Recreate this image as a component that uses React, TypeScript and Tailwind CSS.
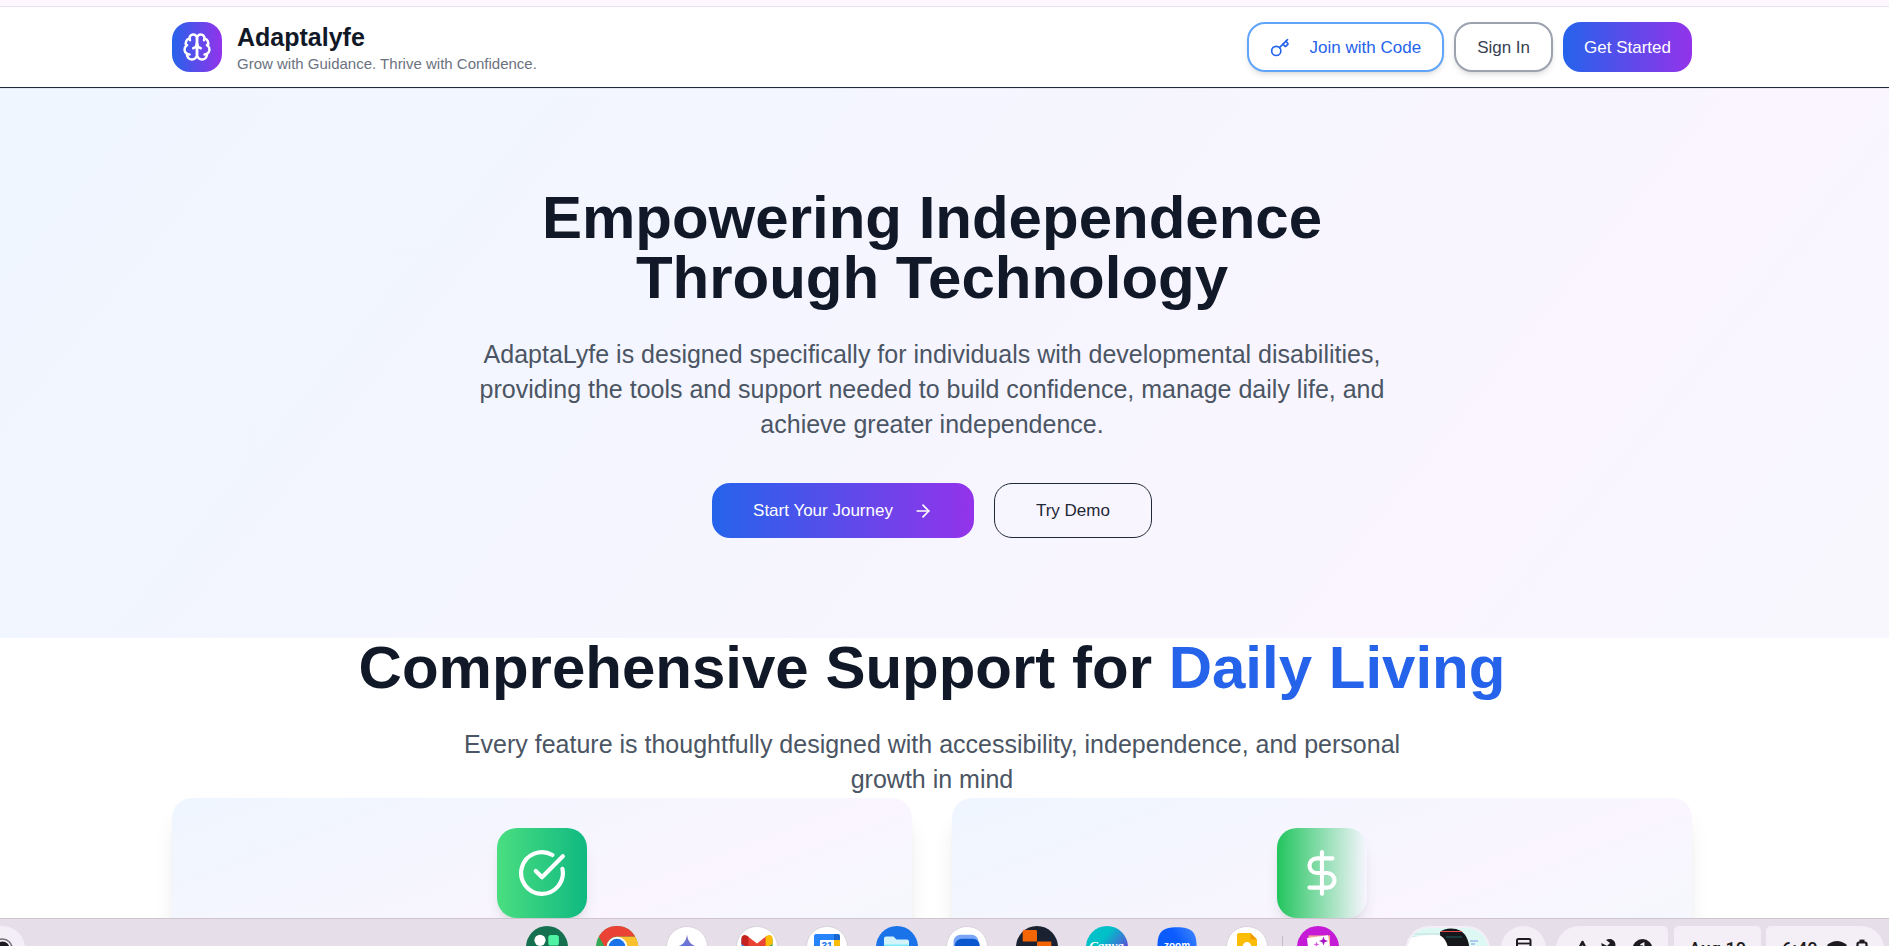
import type { ReactNode } from "react";
import { ArrowRight, CircleCheckBig, DollarSign, Key } from "lucide-react";

function BrainMark() {
  return (
    <svg
      viewBox="0 0 24 24"
      className="size-[30px]"
      fill="none"
      stroke="currentColor"
      strokeWidth="2"
      strokeLinecap="round"
      strokeLinejoin="round"
      aria-hidden="true"
    >
      <path d="M12 5a3 3 0 1 0-5.997.125 4 4 0 0 0-2.526 5.77 4 4 0 0 0 .556 6.588A4 4 0 1 0 12 18Z" />
      <path d="M12 5a3 3 0 1 1 5.997.125 4 4 0 0 1 2.526 5.77 4 4 0 0 1-.556 6.588A4 4 0 1 1 12 18Z" />
      <path d="M15 13a4.5 4.5 0 0 1-3-4 4.5 4.5 0 0 1-3 4" />
      <path d="M17.599 6.5a3 3 0 0 0 .399-1.375" />
      <path d="M6.003 5.125A3 3 0 0 0 6.401 6.5" />
      <path d="M3.477 10.896a4 4 0 0 1 .585-.396" />
      <path d="M19.938 10.5a4 4 0 0 1 .585.396" />
      <path d="M6 18a4 4 0 0 1-1.967-.516" />
      <path d="M19.967 17.484A4 4 0 0 1 18 18" />
    </svg>
  );
}

function Header() {
  return (
    <header className="relative z-10 shrink-0 border-b border-[#1f2937] bg-white pr-[25px] shadow-2xs">
      <div className="mx-auto flex h-20 max-w-[1600px] items-center justify-between px-10">
        <div className="flex items-center gap-[15px]">
          <div className="flex size-[50px] items-center justify-center rounded-[18px] bg-linear-to-r/srgb from-[#2563eb] to-[#9333ea] text-white">
            <BrainMark />
          </div>
          <div>
            <div className="text-[25px] leading-[34px] font-bold text-[#111827]">Adaptalyfe</div>
            <p className="text-[15px] leading-5 text-[#6b7280]">Grow with Guidance. Thrive with Confidence.</p>
          </div>
        </div>
        <div className="flex items-center gap-2.5">
          <button
            type="button"
            className="flex h-[50px] items-center gap-5 rounded-[18px] border-2 border-[#60a5fa] bg-white px-[21px] pt-px text-[17px] text-[#2563eb] shadow-md"
          >
            <Key size={20} />
            Join with Code
          </button>
          <button
            type="button"
            className="h-[50px] rounded-[18px] border-2 border-[#9ca3af] bg-white px-[21px] pt-px text-[17px] text-[#374151] shadow-md"
          >
            Sign In
          </button>
          <button
            type="button"
            className="h-[50px] rounded-[18px] bg-linear-to-r/srgb from-[#2563eb] to-[#9333ea] px-[21px] pt-px text-[17px] text-white"
          >
            Get Started
          </button>
        </div>
      </div>
    </header>
  );
}

function Hero() {
  return (
    <section className="bg-[linear-gradient(129deg,#eff6ff_0%,#faf5ff_78%,#f7f7fd_100%)] py-[100px] pr-[25px] text-center">
      <h1 className="text-[60px] leading-[60px] font-bold text-[#111827]">
        Empowering Independence
        <br />
        Through Technology
      </h1>
      <p className="mx-auto mt-[29px] max-w-[960px] pb-px text-[25px] leading-[35px] text-[#4b5563]">
        AdaptaLyfe is designed specifically for individuals with developmental disabilities, providing the tools and
        support needed to build confidence, manage daily life, and achieve greater independence.
      </p>
      <div className="mt-10 flex justify-center gap-5">
        <button
          type="button"
          className="flex h-[55px] items-center gap-5 rounded-[18px] bg-linear-to-r/srgb from-[#2563eb] to-[#9333ea] px-[41px] text-[17px] text-white"
        >
          Start Your Journey
          <ArrowRight size={20} />
        </button>
        <button
          type="button"
          className="h-[55px] rounded-[18px] border border-[#1f2937] px-[41px] text-[17px] text-[#1f2937]"
        >
          Try Demo
        </button>
      </div>
    </section>
  );
}

function FeatureCard({ tile, children }: { tile: string; children: ReactNode }) {
  return (
    <article className="min-h-[280px] rounded-[20px] bg-[linear-gradient(to_bottom_right,#eff6ff,#faf5ff,#effbf9)] p-[30px] shadow-xl">
      <div className={`mx-auto flex size-[90px] items-center justify-center rounded-[20px] text-white shadow-lg ${tile}`}>
        {children}
      </div>
    </article>
  );
}

function Features() {
  return (
    <section className="bg-white pr-[25px]">
      <div className="text-center">
        <h2 className="text-[60px] leading-[60px] font-bold text-[#111827]">
          Comprehensive Support for <span className="text-[#2563eb]">Daily Living</span>
        </h2>
        <p className="mx-auto mt-[29px] max-w-[960px] pb-px text-[25px] leading-[35px] text-[#4b5563]">
          Every feature is thoughtfully designed with accessibility, independence, and personal growth in mind
        </p>
      </div>
      <div className="mx-auto grid max-w-[1600px] grid-cols-2 gap-10 px-10">
        <FeatureCard tile="bg-linear-to-r/srgb from-[#4ade80] to-[#10b981]">
          <CircleCheckBig size={50} />
        </FeatureCard>
        <FeatureCard tile="bg-linear-to-r/srgb from-[#22c55e] to-transparent">
          <DollarSign size={50} />
        </FeatureCard>
      </div>
    </section>
  );
}

function AppIcon({ label, children }: { label: string; children: ReactNode }) {
  return (
    <button type="button" aria-label={label} className="size-[42px] shrink-0">
      <svg viewBox="0 0 42 42" className="size-[42px]" aria-hidden="true">
        {children}
      </svg>
    </button>
  );
}

function WhiteDisc() {
  return <circle cx="21" cy="21" r="20.5" fill="#fff" stroke="#cfc8d3" strokeWidth="0.7" />;
}

function Dock() {
  return (
    <div className="flex gap-7">
      <AppIcon label="Launcher apps">
        <circle cx="21" cy="21" r="21" fill="#15704f" />
        <circle cx="14" cy="14.3" r="5.6" fill="#fff" />
        <rect x="22.3" y="9" width="10.6" height="10.6" rx="2.6" fill="#4ef3a3" />
        <rect x="9" y="22" width="10.6" height="10.6" rx="2.6" fill="#4ef3a3" />
        <circle cx="27.6" cy="27.4" r="5.6" fill="#fff" />
      </AppIcon>
      <AppIcon label="Chrome">
        <circle cx="21" cy="21" r="21" fill="#34a853" />
        <path d="M21 21V10.5H39.2A21 21 0 0 1 21 42L30 26Z" fill="#fbc02d" />
        <path d="M2.8 10.5A21 21 0 0 1 39.2 10.5H21A10.5 10.5 0 0 0 12 26.2Z" fill="#ea4335" />
        <circle cx="21" cy="21" r="10.3" fill="#fff" />
        <circle cx="21" cy="21" r="8.3" fill="#1a73e8" />
      </AppIcon>
      <AppIcon label="Gemini">
        <defs>
          <linearGradient id="spark" x1="0" y1="1" x2="1" y2="0">
            <stop offset="0" stopColor="#3b82f6" />
            <stop offset="1" stopColor="#8f6bb8" />
          </linearGradient>
        </defs>
        <WhiteDisc />
        <path
          d="M21 8.5C21.8 16 26 20.2 33.5 21C26 21.8 21.8 26 21 33.5C20.2 26 16 21.8 8.5 21C16 20.2 20.2 16 21 8.5Z"
          fill="url(#spark)"
        />
      </AppIcon>
      <AppIcon label="Gmail">
        <WhiteDisc />
        <path d="M5.4 13V31H12V17Z" fill="#4285f4" />
        <path d="M36.6 13V31H30V17Z" fill="#34a853" />
        <path d="M11 9.8L21 17.4L31 9.8V20L21 27.5L11 20Z" fill="#ea4335" />
        <path d="M5.4 18V12.2C5.4 9.4 8.4 8 10.6 9.5L12.4 10.8V22Z" fill="#c5221f" />
        <path d="M36.6 18V12.2C36.6 9.4 33.6 8 31.4 9.5L29.6 10.8V22Z" fill="#fbbc04" />
      </AppIcon>
      <AppIcon label="Calendar">
        <WhiteDisc />
        <path d="M8 10A2 2 0 0 1 10 8H28V14H14V34H10A2 2 0 0 1 8 32Z" fill="#2684fc" />
        <path d="M28 8H32A2 2 0 0 1 34 10V14H28Z" fill="#1967d2" />
        <path d="M28 14H34V28H28Z" fill="#fbbc04" />
        <path d="M14 14H28V28H14Z" fill="#fff" />
        <text x="21" y="24" textAnchor="middle" fontSize="10" fontWeight="700" fill="#1a73e8">
          31
        </text>
      </AppIcon>
      <AppIcon label="Files">
        <circle cx="21" cy="21" r="21" fill="#1a73e8" />
        <path d="M8 12.4A2 2 0 0 1 10 10.4H17.5L20.5 13.4H31A2 2 0 0 1 33 15.4V30H8Z" fill="#d3f3fb" />
        <rect x="8" y="18.5" width="25" height="13" rx="1.5" fill="#7cecfb" />
      </AppIcon>
      <AppIcon label="Messages">
        <WhiteDisc />
        <rect x="7.5" y="8.8" width="25" height="18" rx="7" fill="#7ba6f7" />
        <rect x="8.8" y="12.8" width="25" height="18" rx="7" fill="#0b57d0" />
      </AppIcon>
      <AppIcon label="Code pad">
        <circle cx="21" cy="21" r="21" fill="#1a2130" />
        <rect x="6.7" y="4" width="14.3" height="11.6" rx="1.2" fill="#f56505" />
        <rect x="21" y="15.4" width="14.3" height="11.6" rx="1.2" fill="#f56505" />
        <rect x="6.7" y="26.8" width="14.3" height="11.6" rx="1.2" fill="#f56505" />
      </AppIcon>
      <AppIcon label="Canva">
        <defs>
          <linearGradient id="aqua" x1="0.2" y1="0.1" x2="0.95" y2="0.7">
            <stop offset="0.3" stopColor="#00c0c8" />
            <stop offset="1" stopColor="#6a3ddc" />
          </linearGradient>
        </defs>
        <circle cx="21" cy="21" r="21" fill="url(#aqua)" />
        <text
          x="20.5"
          y="24"
          textAnchor="middle"
          fontSize="13"
          fontStyle="italic"
          fontWeight="700"
          fontFamily="Liberation Serif, serif"
          fill="#fff"
        >
          Canva
        </text>
      </AppIcon>
      <AppIcon label="Zoom">
        <defs>
          <linearGradient id="zoomblue" x1="0.5" y1="0.3" x2="1" y2="0">
            <stop offset="0" stopColor="#0b5cff" />
            <stop offset="1" stopColor="#4489ff" />
          </linearGradient>
        </defs>
        <path d="M21 1.2C36 1.2 40.6 6 40.6 21S36 40.8 21 40.8S1.4 36 1.4 21S6 1.2 21 1.2Z" fill="url(#zoomblue)" />
        <text x="21" y="23" textAnchor="middle" fontSize="10" fontWeight="700" fill="#fff">
          zoom
        </text>
      </AppIcon>
      <AppIcon label="Keep">
        <WhiteDisc />
        <path d="M11 9A2 2 0 0 1 13 7H24.5L31 13.5V33A2 2 0 0 1 29 35H13A2 2 0 0 1 11 33Z" fill="#fbbc04" />
        <path d="M24.5 7L31 13.5H24.5Z" fill="#f29900" />
        <circle cx="21" cy="20.5" r="4.4" fill="#fff" />
        <rect x="18.8" y="26" width="4.4" height="2" fill="#fff" />
      </AppIcon>
      <div className="-mx-3.5 mt-2.5 h-8 w-px bg-[#c5bcc9]" />
      <AppIcon label="Gallery">
        <circle cx="21" cy="21" r="21" fill="#c51ad6" />
        <path d="M11.5 9.4H33V26H11.5Z" fill="#f6a58f" />
        <path d="M10 12L31 9.2L34 28L12 31Z" fill="#fff" />
        <path d="M26.5 10.5L27.7 13.8L31 15L27.7 16.2L26.5 19.5L25.3 16.2L22 15L25.3 13.8Z" fill="#a512c0" />
        <path d="M19.5 15.5L20.3 17.7L22.5 18.5L20.3 19.3L19.5 21.5L18.7 19.3L16.5 18.5L18.7 17.7Z" fill="#d95be4" />
      </AppIcon>
    </div>
  );
}

function StatusArea() {
  return (
    <div className="flex justify-end text-[18px] leading-[46px] font-medium text-[#1d1b20]">
      <button type="button" aria-label="Recent captures" className="mr-[11px] h-[46px] w-[84px] overflow-hidden rounded-full">
        <svg viewBox="0 0 84 46" className="h-[46px] w-[84px]" aria-hidden="true">
          <rect width="84" height="46" rx="23" fill="#def8f4" />
          <path d="M4 8H36M6 11H34" stroke="#bcd9d6" strokeWidth="0.8" />
          <path d="M34 6C38 2 48 1 55 5C62 10 65 18 64 46H36Z" fill="#16171a" />
          <path d="M35 5.5H56" stroke="#e5484d" strokeWidth="1.2" />
          <path d="M40 11H56" stroke="#1f7a78" strokeWidth="0.8" />
          <path d="M0 46V13C14 9 30 8 35 10C42 15 44 24 43 46Z" fill="#fff" />
          <path d="M64 15H72M65 18H69" stroke="#6f8fe8" strokeWidth="0.9" />
          <rect x="1" y="1" width="82" height="44" rx="22" fill="none" stroke="#f4eff6" strokeWidth="2" />
        </svg>
      </button>
      <button type="button" aria-label="Holding space" className="mr-2.5 size-[45px] rounded-full bg-[#f4eff6]">
        <svg viewBox="0 0 45 45" className="size-[45px]" aria-hidden="true">
          <rect x="16" y="13" width="13.5" height="19" rx="1.5" fill="none" stroke="#1d1b20" strokeWidth="2" />
          <path d="M16 17.5H29.5" stroke="#1d1b20" strokeWidth="1.8" />
        </svg>
      </button>
      <button
        type="button"
        aria-label="Notifications"
        className="mr-1.5 h-[46px] w-[112px] rounded-l-[23px] rounded-r-[5px] bg-[#f4eff6]"
      >
        <svg viewBox="0 0 112 46" className="h-[46px] w-[112px]" aria-hidden="true">
          <path d="M26.5 16L33.5 30H19.5Z" fill="none" stroke="#1d1b20" strokeWidth="2.6" strokeLinejoin="round" />
          <path d="M50 14C56 11 61 16 59 21L64 30L60 33L53 24C49 24 45 22 45.5 17L51 20L54 17Z" fill="#1d1b20" />
          <circle cx="86.5" cy="23" r="10" fill="#1d1b20" />
          <path d="M84.5 19L87.5 17.5V28" fill="none" stroke="#f4eff6" strokeWidth="1.8" />
        </svg>
      </button>
      <button type="button" className="mr-[5px] h-[46px] w-[87px] rounded-[5px] bg-[#f4eff6] font-[Roboto,sans-serif]">
        Aug 10
      </button>
      <button
        type="button"
        className="flex h-[46px] w-[118px] items-center gap-2 rounded-l-[5px] rounded-r-[23px] bg-[#f4eff6] pl-4 font-[Roboto,sans-serif]"
      >
        6:40
        <svg viewBox="0 0 48 46" className="h-[46px] w-12" aria-hidden="true">
          <path d="M2 19C9 13.5 15 13.5 22 19L12 31Z" fill="#1d1b20" />
          <rect x="32.5" y="16.5" width="9" height="16" rx="1.5" fill="none" stroke="#1d1b20" strokeWidth="2.2" />
          <path d="M34.5 14.8H39.5" stroke="#1d1b20" strokeWidth="2.4" />
        </svg>
      </button>
    </div>
  );
}

function Shelf() {
  return (
    <footer className="relative z-10 h-7 shrink-0 overflow-hidden border-t border-[#cdc4d0] bg-[#e6dfea]">
      <div className="-ml-[25px] grid grid-cols-[1fr_auto_1fr] items-start px-[5px] pt-[7px]">
        <button type="button" aria-label="Launcher" className="size-[45px] rounded-full bg-[#f4eff6]">
          <svg viewBox="0 0 45 45" className="size-[45px]" aria-hidden="true">
            <circle cx="22.5" cy="22.5" r="9.5" fill="none" stroke="#77737c" strokeWidth="1.6" />
            <circle cx="22.5" cy="22.5" r="7" fill="#1d1b20" />
          </svg>
        </button>
        <Dock />
        <StatusArea />
      </div>
    </footer>
  );
}

export default function App() {
  return (
    <div className="flex h-screen flex-col overflow-hidden bg-white font-['Liberation_Sans',Arial,sans-serif]">
      <div className="h-[7px] shrink-0 border-b border-[#e8e0ea] bg-[#fef7ff]" />
      <Header />
      <main className="min-h-0 flex-1 overflow-hidden">
        <Hero />
        <Features />
      </main>
      <Shelf />
    </div>
  );
}
